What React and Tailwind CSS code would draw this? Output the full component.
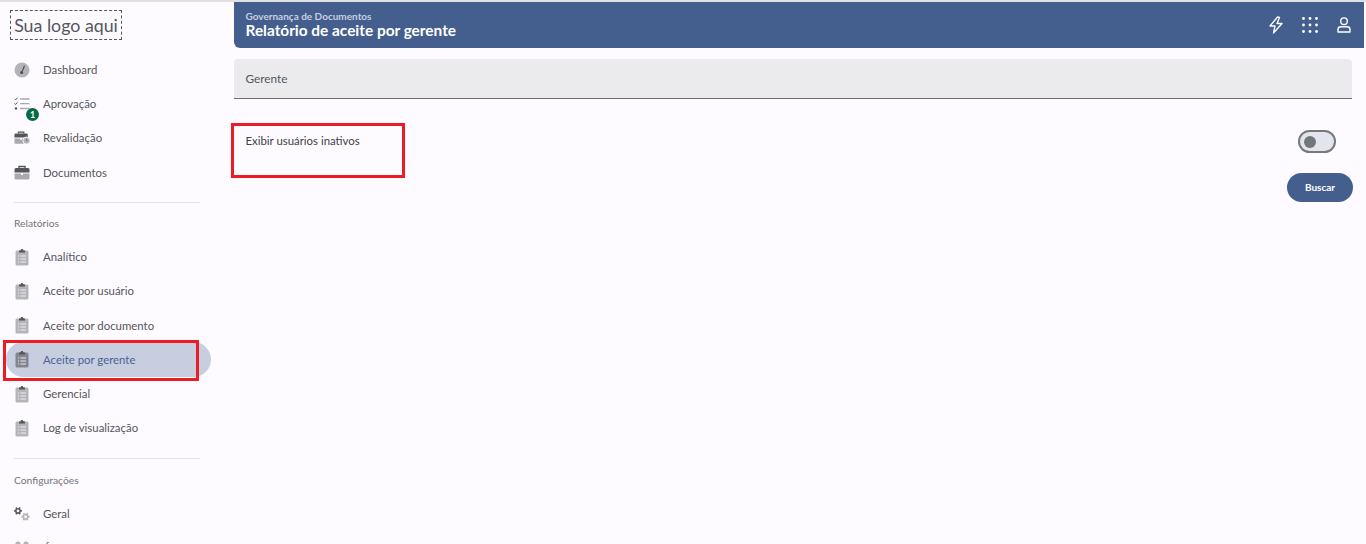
import React from 'react';

const ClipboardIcon = ({ dark }) => (
  <svg width="14" height="18" viewBox="0 0 14 18">
    <rect x="0.5" y="2.5" width="13" height="15" rx="1.5" fill={dark ? '#84868f' : '#b5b5b9'} />
    <path d="M4 4.5V2.5H5.5C5.6 0.4 8.4 0.4 8.5 2.5H10V4.5Z" fill="#55565c" />
    <path d="M3 8h1.2M3 11h1.2M3 14h1.2M5.5 8H11M5.5 11H11M5.5 14H11" stroke="#f4f4f6" strokeWidth="0.9" />
  </svg>
);

const DashIcon = () => (
  <svg width="16" height="16" viewBox="0 0 16 16">
    <circle cx="8" cy="8" r="7.5" fill="#b3b3b8" />
    <path d="M10.5 3.8L8.2 9.5" stroke="#4c4d52" strokeWidth="1.1" />
    <circle cx="7.6" cy="10.6" r="1.5" fill="#4c4d52" />
  </svg>
);

const ChecklistIcon = () => (
  <svg width="16" height="14" viewBox="0 0 16 14" fill="none">
    <path d="M0.5 1.8L1.6 2.9L3.4 0.8M0.5 6.4L1.6 7.5L3.4 5.4" stroke="#55565c" strokeWidth="1" />
    <circle cx="2" cy="11.5" r="1.2" fill="#55565c" />
    <path d="M6 2H15.5M6 6.6H15.5M6 11.5H15.5" stroke="#a9a9ae" strokeWidth="1.3" />
  </svg>
);

const CaseIcon = ({ clock }) => (
  <svg width={clock ? 18 : 16} height="15" viewBox={clock ? '0 0 18 15' : '0 0 16 15'}>
    <path d="M5 3V1.5H11V3" fill="none" stroke="#55565c" strokeWidth="1.4" />
    <path d="M0.5 4.5A1.5 1.5 0 0 1 2 3H14A1.5 1.5 0 0 1 15.5 4.5V7.5H0.5Z" fill="#55565c" />
    <path d="M0.5 8.5H7V10H9V8.5H15.5V13A1.5 1.5 0 0 1 14 14.5H2A1.5 1.5 0 0 1 0.5 13Z" fill="#a9a9ae" />
    {clock && <circle cx="14" cy="11" r="4" fill="#b5b5b9" stroke="#fdfbff" />}
    {clock && <path d="M14 9V11.2H15.6" fill="none" stroke="#55565c" strokeWidth="0.7" />}
  </svg>
);

const Gear = ({ x, y, r, color }) => (
  <g fill="none" stroke={color}>
    <circle cx={x} cy={y} r={r * 0.55} strokeWidth={r * 0.38} />
    {[0, 60, 120, 180, 240, 300].map((a) => {
      const c = Math.cos((a * Math.PI) / 180);
      const s = Math.sin((a * Math.PI) / 180);
      return (
        <line key={a} x1={x + r * 0.6 * c} y1={y + r * 0.6 * s} x2={x + r * c} y2={y + r * s} strokeWidth={r * 0.42} />
      );
    })}
  </g>
);

const GearsIcon = () => (
  <svg width="18" height="16" viewBox="0 0 18 16">
    <Gear x={4.5} y={4.5} r={4.4} color="#55565c" />
    <Gear x={13} y={11} r={4.6} color="#b3b3b8" />
  </svg>
);

const DotsIcon = () => (
  <svg width="16" height="16" viewBox="0 0 16 16">
    <circle cx="4" cy="4" r="2.6" fill="#b3b3b8" />
    <circle cx="12" cy="4" r="2.6" fill="#b3b3b8" />
  </svg>
);

function NavItem({ icon, label, active, badge }) {
  return (
    <div className={`relative flex h-[34.2px] items-center ${active ? 'text-[#4a6491]' : 'text-[#55565c]'}`}>
      {active && <div className="absolute left-[6px] top-0 h-[35px] w-[205px] rounded-full bg-[#c6cee0]" />}
      <div className="relative flex w-[43px] shrink-0 justify-center">
        <div className="flex w-[16px] justify-center">{icon}</div>
        {badge && (
          <span className="absolute left-[26px] top-[11px] flex h-[13px] w-[13px] items-center justify-center rounded-full bg-[#056b45] text-[9px] font-bold text-white">
            {badge}
          </span>
        )}
      </div>
      <span className="relative text-[11.4px]">{label}</span>
    </div>
  );
}

const relatorios = ['Analítico', 'Aceite por usuário', 'Aceite por documento', 'Aceite por gerente', 'Gerencial', 'Log de visualização'];

export default function App() {
  return (
    <div className="relative h-[544px] w-full overflow-hidden bg-[#fdfbff] font-['Lato',sans-serif]">
      <div className="h-[2px] bg-[#dfe1e3]" />
      <div className="flex">
        <aside className="w-[234px] shrink-0">
          <div className="ml-[10px] mt-[8px] flex h-[30px] w-[112px] items-center justify-center whitespace-nowrap border border-dashed border-[#55565c] text-[17.8px] text-[#55565c]">
            Sua logo aqui
          </div>
          <nav className="mt-[12.5px]">
            <NavItem icon={<DashIcon />} label="Dashboard" />
            <NavItem icon={<ChecklistIcon />} label="Aprovação" badge="1" />
            <NavItem icon={<CaseIcon clock />} label="Revalidação" />
            <NavItem icon={<CaseIcon />} label="Documentos" />
          </nav>
          <div className="ml-[14px] mt-[13px] h-px w-[186px] bg-[#e2e2e5]" />
          <div className="ml-[14px] mt-[13px] h-[14px] text-[10.3px] leading-[14px] text-[#74757b]">Relatórios</div>
          <nav className="mt-[9.5px]">
            {relatorios.map((r) => (
              <NavItem key={r} icon={<ClipboardIcon dark={r === 'Aceite por gerente'} />} label={r} active={r === 'Aceite por gerente'} />
            ))}
          </nav>
          <div className="ml-[14px] mt-[13.5px] h-px w-[186px] bg-[#e2e2e5]" />
          <div className="ml-[14px] mt-[14px] h-[14px] text-[10.3px] leading-[14px] text-[#74757b]">Configurações</div>
          <nav className="mt-[9.5px]">
            <NavItem icon={<GearsIcon />} label="Geral" />
            <NavItem icon={<DotsIcon />} label="Áreas" />
          </nav>
        </aside>

        <main className="mr-[2px] min-w-0 flex-1">
          <header className="flex h-[46px] items-center justify-between rounded-bl-[6px] bg-[#445f8e] pl-[11.5px] pr-[13px] text-white">
            <div>
              <div className="text-[10px] font-bold leading-[10px] text-[#c6cee0]">Governança de Documentos</div>
              <div className="text-[15.4px] font-bold leading-[19px]">Relatório de aceite por gerente</div>
            </div>
            <div className="flex items-center gap-[18px]">
              <svg width="16" height="18" viewBox="0 0 16 18" fill="none" stroke="white" strokeWidth="1.3" strokeLinejoin="round">
                <path d="M9.5 1L2 10H7L5.5 17L14 7.5H9L11.5 1.5Z" />
              </svg>
              <svg width="16" height="16" viewBox="0 0 16 16" fill="white">
                {[1.5, 8, 14.5].map((y) =>
                  [1.5, 8, 14.5].map((x) => <circle key={`${x}-${y}`} cx={x} cy={y} r="1.4" />)
                )}
              </svg>
              <svg className="ml-px" width="14" height="16" viewBox="0 0 14 16" fill="none" stroke="white" strokeWidth="1.4">
                <circle cx="7" cy="4.2" r="3.3" />
                <path d="M1 15V12.5C1 10.8 2.3 9.8 4 9.8H10C11.7 9.8 13 10.8 13 12.5V15Z" strokeLinejoin="round" />
              </svg>
            </div>
          </header>

          <div className="mr-[12px]">
            <div className="mt-[11px] flex h-[40px] items-center rounded-t-[4px] border-b border-[#6e6f75] bg-[#ebebed] px-[11.5px] text-[11.8px] text-[#55565c]">
              Gerente
            </div>
            <div className="mt-[23px] flex items-start justify-between pl-[11.5px] pr-[16px]">
              <span className="pt-[11px] text-[11.4px] leading-[16px] text-[#3f4045]">Exibir usuários inativos</span>
              <div className="mt-[8px] flex h-[23px] w-[38px] items-center rounded-full border-2 border-[#77787e] bg-[#e3e5ee] pl-[4px]">
                <div className="h-[12px] w-[12px] rounded-full bg-[#75767c]" />
              </div>
            </div>
            <div className="mt-[20px] flex justify-end">
              <button className="-mr-px h-[29px] w-[66px] rounded-full bg-[#445f8e] text-[10px] font-bold text-white">Buscar</button>
            </div>
          </div>
        </main>
      </div>

      {/* marcacoes vermelhas do print */}
      <div className="absolute left-[3px] top-[340px] h-[41px] w-[196px] border-[3px] border-[#ed1c24]" />
      <div className="absolute left-[231px] top-[123px] h-[55px] w-[174px] border-[3px] border-[#ed1c24]" />
    </div>
  );
}
